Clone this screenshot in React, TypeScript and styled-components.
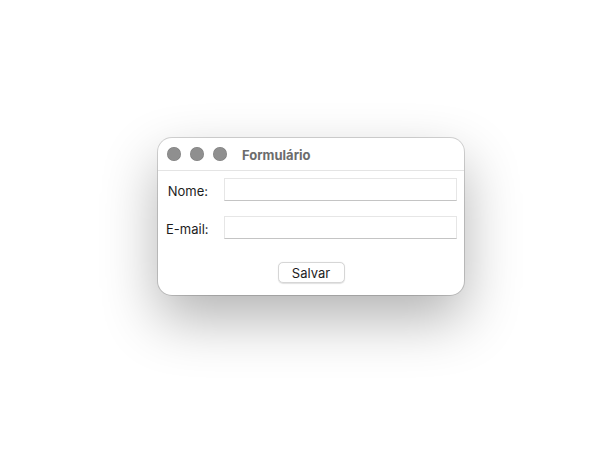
import styled, { createGlobalStyle } from 'styled-components';

const GlobalStyle = createGlobalStyle`
  html, body {
    margin: 0;
    padding: 0;
    background: #ffffff;
    font-family: Inter, "Liberation Sans", Arial, sans-serif;
  }
`;

const Desktop = styled.div`
  width: 612px;
  height: 455px;
  box-sizing: border-box;
  padding: 138px 0 0 158px;
  display: flex;
  align-items: flex-start;
`;

const Window = styled.div`
  width: 306px;
  height: 157px;
  box-sizing: border-box;
  background: #ffffff;
  border-radius: 14px;
  box-shadow: 0 0 0 1px rgba(0, 0, 0, 0.16), 0 24px 56px rgba(0, 0, 0, 0.3);
  display: flex;
  flex-direction: column;
  overflow: hidden;
`;

const TitleBar = styled.div`
  height: 32px;
  flex: none;
  display: flex;
  align-items: center;
  padding-left: 9px;
  border-bottom: 1px solid #e4e4e4;
`;

const Lights = styled.div`
  display: flex;
  gap: 9px;
  margin-right: 15px;
`;

const Light = styled.span`
  width: 14px;
  height: 14px;
  border-radius: 50%;
  background: #8f8f8f;
  box-shadow: inset 0 0 0 0.5px rgba(0, 0, 0, 0.15);
`;

const Title = styled.span`
  font-size: 13px;
  font-weight: 700;
  color: #6c6c6c;
  padding-top: 1px;
`;

const Form = styled.form`
  display: flex;
  flex-direction: column;
  padding: 7px 7px 0 8px;
  margin: 0;
`;

const Row = styled.div<{ $gap?: number }>`
  display: flex;
  align-items: center;
  gap: 16px;
  margin-bottom: ${p => p.$gap ?? 15}px;
`;

const Label = styled.label`
  width: 42px;
  text-align: right;
  font-size: 13px;
  color: #1d1d1d;
  white-space: nowrap;
  padding-top: 2px;
`;

const Input = styled.input`
  flex: 1;
  height: 23px;
  box-sizing: border-box;
  border: 1px solid #e6e6e6;
  border-bottom-color: #c4c4c4;
  background: #ffffff;
  outline: none;
  padding: 0 4px;
  font: inherit;
  font-size: 13px;
`;

const Actions = styled.div`
  display: flex;
  justify-content: center;
  margin-top: 23px;
`;

const Button = styled.button`
  width: 67px;
  height: 21px;
  box-sizing: border-box;
  border: 1px solid #d6d6d6;
  border-radius: 5px;
  background: #ffffff;
  box-shadow: 0 0.5px 1px rgba(0, 0, 0, 0.12);
  font-family: inherit;
  font-size: 13px;
  color: #1d1d1d;
  padding: 0;
  margin-right: 1px;
`;

export default function App() {
  return (
    <>
      <GlobalStyle />
      <Desktop>
        <Window>
          <TitleBar>
            <Lights>
              <Light />
              <Light />
              <Light />
            </Lights>
            <Title>Formulário</Title>
          </TitleBar>
          <Form onSubmit={e => e.preventDefault()}>
            <Row>
              <Label htmlFor="nome">Nome:</Label>
              <Input id="nome" type="text" />
            </Row>
            <Row $gap={0}>
              <Label htmlFor="email">E-mail:</Label>
              <Input id="email" type="email" />
            </Row>
            <Actions>
              <Button type="submit">Salvar</Button>
            </Actions>
          </Form>
        </Window>
      </Desktop>
    </>
  );
}
